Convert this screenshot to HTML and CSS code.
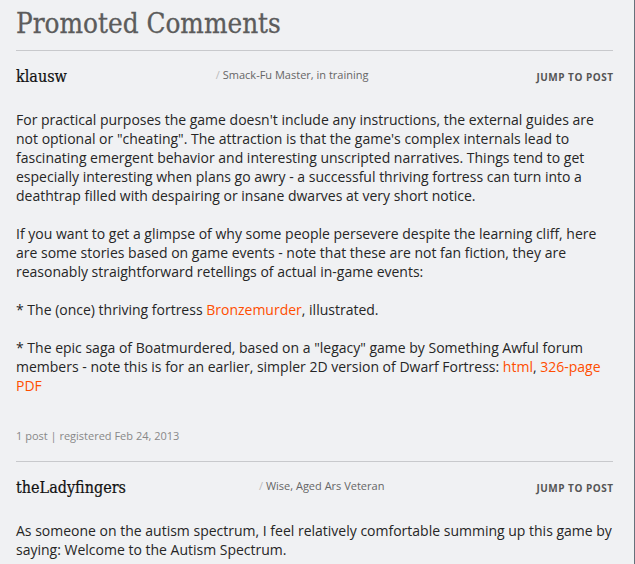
FILE: index.html
```html
<!DOCTYPE html>
<html>
<head>
<meta charset="utf-8">
<link rel="stylesheet" href="styles.css">
</head>
<body>
<div class="page">
  <h2 class="section-title">Promoted Comments</h2>
  <div class="comment">
    <div class="comment-head">
      <span class="author">klausw</span>
      <span class="rank"><span class="slash">/</span> Smack-Fu Master, in training</span>
      <a class="jump">Jump to post</a>
    </div>
    <div class="comment-body">
      <p>For practical purposes the game doesn't include any instructions, the external guides are not optional or "cheating". The attraction is that the game's complex internals lead to fascinating emergent behavior and interesting unscripted narratives. Things tend to get especially interesting when plans go awry - a successful thriving fortress can turn into a deathtrap filled with despairing or insane dwarves at very short notice.</p>
      <p>If you want to get a glimpse of why some people persevere despite the learning cliff, here are some stories based on game events - note that these are not fan fiction, they are reasonably straightforward retellings of actual in-game events:</p>
      <p>* The (once) thriving fortress <a class="link">Bronzemurder</a>, illustrated.</p>
      <p>* The epic saga of Boatmurdered, based on a "legacy" game by Something Awful forum members - note this is for an earlier, simpler 2D version of Dwarf Fortress: <a class="link">html</a>, <a class="link">326-page PDF</a></p>
    </div>
    <div class="comment-meta">1 post | registered Feb 24, 2013</div>
  </div>
  <div class="comment">
    <div class="comment-head">
      <span class="author">theLadyfingers</span>
      <span class="rank"><span class="slash">/</span> Wise, Aged Ars Veteran</span>
      <a class="jump">Jump to post</a>
    </div>
    <div class="comment-body">
      <p>As someone on the autism spectrum, I feel relatively comfortable summing up this game by saying: Welcome to the Autism Spectrum.</p>
    </div>
  </div>
</div>
</body>
</html>
```

FILE: styles.css
```css
html, body {
  margin: 0;
  padding: 0;
  background: #f0f1f3;
}
.page {
  box-sizing: border-box;
  width: 635px;
  height: 564px;
  overflow: hidden;
  padding: 0 21px 0 16px;
  border-right: 1px solid #66717b;
  font-family: "Open Sans", sans-serif;
  color: #262626;
}
.section-title {
  margin: 0;
  padding-top: 8px;
  padding-bottom: 10px;
  border-bottom: 1px solid #c8c9cc;
  font-family: "DejaVu Serif Condensed", "DejaVu Serif", serif;
  font-stretch: semi-condensed;
  font-weight: normal;
  font-size: 27.6px;
  line-height: 32px;
  color: #5c5c5c;
  -webkit-text-stroke: 0.3px #5c5c5c;
}
.comment {
  padding-top: 16px;
  padding-bottom: 18px;
}
.comment + .comment {
  border-top: 1px solid #c8c9cc;
}
.comment-head {
  display: flex;
  justify-content: space-between;
  align-items: flex-start;
}
.author {
  font-family: "DejaVu Serif Condensed", "DejaVu Serif", serif;
  font-stretch: semi-condensed;
  font-size: 16px;
  line-height: 20px;
  color: #111;
  -webkit-text-stroke: 0.2px #111;
}
.rank {
  margin-top: 1px;
  margin-right: 19px;
  font-size: 11px;
  line-height: 14px;
  color: #666;
}
.slash {
  color: #bbb;
}
.jump {
  margin-top: 3px;
  font-size: 10px;
  line-height: 14px;
  font-weight: bold;
  letter-spacing: 0.5px;
  margin-right: -0.5px;
  text-transform: uppercase;
  color: #555;
}
.comment-body {
  margin-top: 23px;
  font-size: 14px;
  line-height: 19px;
}
.comment-body p {
  margin: 0 0 19px;
}
.comment-body p:last-child {
  margin-bottom: 0;
}
.link {
  color: #ff4e00;
}
.comment-meta {
  margin-top: 34px;
  font-size: 11px;
  line-height: 14px;
  color: #888;
}
```
